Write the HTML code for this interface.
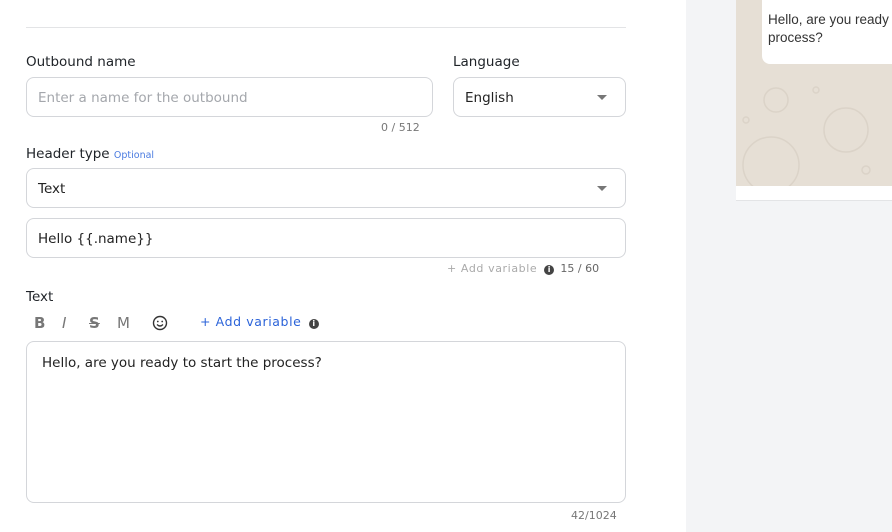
<!DOCTYPE html><html><head><style>
body{margin:0;width:892px;height:532px;overflow:hidden;background:#f3f4f6;font-family:"DejaVu Sans",sans-serif;position:relative}
.main{position:absolute;left:0;top:0;width:686px;height:532px;background:#fff}
.a{position:absolute}
.lbl{font-size:13.5px;color:#1f2328}
.box{position:absolute;border:1px solid #d4d6da;border-radius:8px;box-sizing:border-box;font-size:13.5px;color:#222;padding-left:11px;padding-top:2px;display:flex;align-items:center}
.car{position:absolute;right:18px;top:50%;margin-top:-2px;width:0;height:0;border-left:5px solid transparent;border-right:5px solid transparent;border-top:5px solid #777}
.sm{font-size:11px;color:#777}
.i{display:inline-block;width:10px;height:10px;border-radius:50%;background:#444;color:#fff;font-size:8px;line-height:10px;text-align:center;font-weight:bold;vertical-align:0px}
</style></head><body>
<div class="main">
<div class="a" style="left:26px;top:27px;width:600px;height:1px;background:#e3e4e6"></div>
<div class="a lbl" style="left:26px;top:54px">Outbound name</div>
<div class="a lbl" style="left:453px;top:54px">Language</div>
<div class="box" style="left:26px;top:77px;width:407px;height:40px;color:#a4a7ac">Enter a name for the outbound</div>
<div class="box" style="left:453px;top:77px;width:173px;height:40px">English<div class="car"></div></div>
<div class="a sm" style="left:381px;top:121px">0 / 512</div>
<div class="a lbl" style="left:26px;top:146px">Header type <span style="font-size:9.5px;color:#4a7be0">Optional</span></div>
<div class="box" style="left:26px;top:168px;width:600px;height:40px">Text<div class="car"></div></div>
<div class="box" style="left:26px;top:218px;width:600px;height:40px">Hello {{.name}}</div>
<div class="a sm" style="left:447px;top:262px;color:#aaa;letter-spacing:.6px">+ Add variable <span class="i" style="margin:0 6px 0 3px">i</span><span style="color:#666;letter-spacing:0">15 / 60</span></div>
<div class="a lbl" style="left:26px;top:289px">Text</div>
<div class="a" style="left:34px;top:314px;font-size:15px;color:#777;font-weight:bold">B</div>
<div class="a" style="left:62px;top:314px;font-size:15px;color:#777;font-style:italic">I</div>
<div class="a" style="left:89px;top:314px;font-size:15px;color:#777;font-weight:bold;text-decoration:line-through">S</div>
<div class="a" style="left:117px;top:314px;font-size:15px;color:#777">M</div>
<svg class="a" style="left:152px;top:315px" width="16" height="16" viewBox="0 0 16 16"><circle cx="8" cy="8" r="6.5" fill="none" stroke="#333" stroke-width="1.4"/><circle cx="5.8" cy="6.5" r="0.9" fill="#333"/><circle cx="10.2" cy="6.5" r="0.9" fill="#333"/><path d="M5 9.5Q8 12.5 11 9.5" fill="none" stroke="#333" stroke-width="1.3"/></svg>
<div class="a" style="left:200px;top:314px;font-size:12.5px;color:#2b63d9;letter-spacing:.6px">+ Add variable <span class="i" style="margin-left:3px">i</span></div>
<div class="a" style="left:26px;top:341px;width:600px;height:162px;border:1px solid #d4d6da;border-radius:8px;box-sizing:border-box"></div>
<div class="a" style="left:42px;top:355px;font-size:13.5px;color:#222">Hello, are you ready to start the process?</div>
<div class="a sm" style="left:571px;top:509px">42/1024</div>
</div>
<div class="a" style="left:736px;top:0;width:156px;height:186px;background:#e6dfd5"></div>
<svg class="a" style="left:736px;top:0" width="156" height="186" fill="none" stroke="#dbd3c8" stroke-width="1.5"><circle cx="35" cy="165" r="28"/><circle cx="110" cy="130" r="22"/><circle cx="40" cy="100" r="12"/><circle cx="10" cy="120" r="3"/><circle cx="80" cy="90" r="3"/><circle cx="130" cy="170" r="4"/></svg>
<div class="a" style="left:736px;top:186px;width:156px;height:14px;background:#fff;border-bottom:1px solid #e3e4e6"></div>
<div class="a" style="left:762px;top:-10px;width:140px;height:74px;background:#fff;border-radius:8px"></div>
<div class="a" style="left:768px;top:11px;font-family:'Liberation Sans',sans-serif;font-size:13.5px;color:#333;line-height:18px;white-space:nowrap">Hello, are you ready<br>process?</div>
</body></html>
